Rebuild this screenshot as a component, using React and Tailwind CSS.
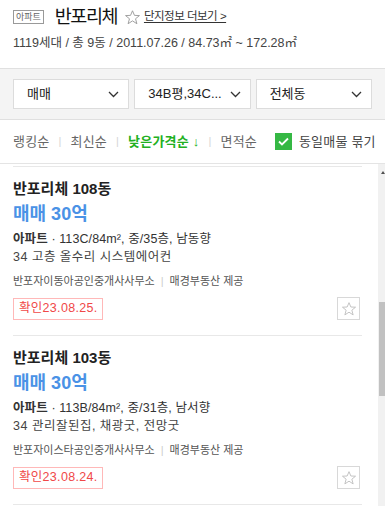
import React from "react";

const Star = ({ size = 16, color = "#aaa" }) => (
  <svg width={size} height={size} viewBox="0 0 24 24" fill="none">
    <polygon
      points="12,2.5 14.8,9 21.8,9.3 16.3,13.8 18.2,20.8 12,16.8 5.8,20.8 7.7,13.8 2.2,9.3 9.2,9"
      stroke={color}
      strokeWidth="1.3"
      strokeLinejoin="round"
    />
  </svg>
);

const Chevron = () => (
  <svg width="11" height="7" viewBox="0 0 11 7" fill="none">
    <path d="M1 1 L5.5 5.5 L10 1" stroke="#333" strokeWidth="1.3" />
  </svg>
);

const Select = ({ label }) => (
  <div className="flex-1 h-[30px] bg-white border border-[#dcdcdc] flex items-center justify-between pl-[13px] pr-[9px] text-[13px] text-[#222]">
    <span>{label}</span>
    <Chevron />
  </div>
);

const Sep = () => <span className="shrink-0 text-[#d5d5d5] text-[11px] mx-[9px]">|</span>;

const Item = ({ dong, spec, desc, broker, date }) => (
  <div className="ml-[13px] mr-[16px] pt-[12px] pb-[15px] border-b border-[#e8e8e8]">
    <div className="h-[20px] leading-[20px] text-[15px] font-bold text-[#222]">반포리체 {dong}</div>
    <div className="mt-[2px] h-[26px] leading-[26px] text-[18px] font-bold text-[#4a92e6]">매매 30억</div>
    <div className="mt-[3px] h-[18px] leading-[18px] text-[12.5px] text-[#333] tracking-[0.1px]">
      <span className="font-bold">아파트</span> · {spec}
    </div>
    <div className="h-[18px] leading-[18px] text-[12.5px] text-[#444] tracking-[0.5px]">{desc}</div>
    <div className="mt-[7px] h-[16px] leading-[16px] text-[11px] text-[#555] flex items-center">
      <span>{broker}</span>
      <span className="text-[#ccc] mx-[6px]">|</span>
      <span>매경부동산 제공</span>
    </div>
    <div className="mt-[8px] flex items-center justify-between">
      <div className="h-[22px] px-[5px] border border-[#ffb8b8] flex items-center text-[12.5px] text-[#f04848] tracking-[0.3px]">확인{date}</div>
      <div className="w-[23px] h-[23px] border border-[#d8d8d8] flex items-center justify-center mr-[2px]">
        <Star size={16} color="#bbb" />
      </div>
    </div>
  </div>
);

export default function App() {
  return (
    <div
      className="w-[385px] h-[506px] overflow-hidden bg-white flex flex-col"
      style={{ fontFamily: '"Liberation Sans", "Noto Sans CJK KR", sans-serif' }}
    >
      {/* header */}
      <div className="h-[69px] px-[13px] pt-[5px] border-b border-[#e0e0e0] shrink-0">
        <div className="flex items-center h-[24px]">
          <span className="h-[14px] px-[2px] border border-[#999] text-[9px] leading-[12px] text-[#666]">아파트</span>
          <span className="ml-[11px] text-[18.5px] leading-[24px] text-[#111] tracking-[-1.5px]">반포리체</span>
          <span className="ml-[7px]"><Star size={17} color="#999" /></span>
          <span className="ml-[3px] text-[11.5px] text-[#333] underline underline-offset-2 tracking-[-0.5px]">단지정보 더보기 &gt;</span>
        </div>
        <div className="mt-[6px] text-[12.5px] leading-[16px] text-[#444] tracking-[0px] whitespace-nowrap">
          1119세대 / 총 9동 / 2011.07.26 / 84.73㎡ ~ 172.28㎡
        </div>
      </div>

      {/* filters */}
      <div className="bg-[#f4f4f4] px-[13px] py-[10px] flex gap-[5px] border-b border-[#e0e0e0] shrink-0">
        <Select label="매매" />
        <Select label="34B평,34C..." />
        <Select label="전체동" />
      </div>

      {/* sort */}
      <div className="h-[44px] px-[13px] flex items-center border-b border-[#e4e4e4] shrink-0 text-[13px] tracking-[0.2px] whitespace-nowrap">
        <span className="shrink-0 text-[#666]">랭킹순</span>
        <Sep />
        <span className="shrink-0 text-[#666]">최신순</span>
        <Sep />
        <span className="shrink-0 text-[#22b022] font-bold">낮은가격순 ↓</span>
        <Sep />
        <span className="shrink-0 text-[#666]">면적순</span>
        <div className="shrink-0 ml-[18px] w-[17px] h-[17px] bg-[#35b844] flex items-center justify-center">
          <svg width="11" height="9" viewBox="0 0 11 9" fill="none">
            <path d="M1 4.5 L4 7.5 L10 1.5" stroke="white" strokeWidth="1.8" />
          </svg>
        </div>
        <span className="shrink-0 ml-[7px] text-[#444]">동일매물 묶기</span>
      </div>

      {/* list */}
      <div className="flex-1 flex min-h-0">
        <div className="flex-1 overflow-hidden">
          <div className="ml-[13px] mr-[16px] h-[3px] border-b border-[#e8e8e8]" />
          <Item
            dong="108동"
            spec="113C/84m², 중/35층, 남동향"
            desc="34 고층 올수리 시스템에어컨"
            broker="반포자이동아공인중개사사무소"
            date="23.08.25."
          />
          <Item
            dong="103동"
            spec="113B/84m², 중/31층, 남서향"
            desc="34 관리잘된집, 채광굿, 전망굿"
            broker="반포자이스타공인중개사사무소"
            date="23.08.24."
          />
        </div>
        <div className="w-[7px] bg-[#f1f1f1] flex flex-col items-center">
          <div className="mt-[7px] ml-[3px] w-0 h-0 border-l-[2px] border-r-[2px] border-b-[3px] border-l-transparent border-r-transparent border-b-[#505050]" />
          <div className="mt-[128px] ml-[1px] w-[6px] h-[94px] bg-[#c1c1c1]" />
        </div>
      </div>
    </div>
  );
}
